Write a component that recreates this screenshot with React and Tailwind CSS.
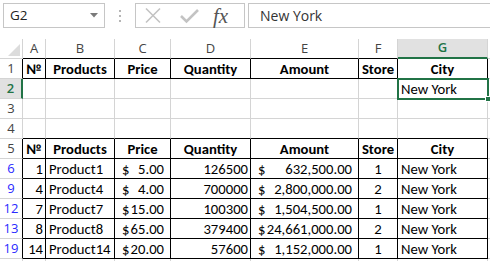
import React from "react";

const gridTpl = "grid grid-cols-[23px_23px_69px_56px_80px_108px_39px_90px_1fr]";

const cellFont = { fontFamily: "Carlito, Lato, 'Liberation Sans', sans-serif" };

function HeaderCell({ children, selected }) {
  return (
    <div
      className={
        "h-[20px] flex items-center justify-center text-[13px] border-r border-b " +
        (selected
          ? "bg-[#e1e1e1] text-[#217346] font-semibold border-r-[#d4d4d4] border-b-2 border-b-[#217346]"
          : "bg-white text-[#444] border-r-[#d4d4d4] border-b-black")
      }
      style={{ fontFamily: "'Open Sans', 'Noto Sans', sans-serif" }}
    >
      {children}
    </div>
  );
}

function RowHead({ n, kind }) {
  let cls = "h-[20px] flex items-center justify-center text-[13px] border-b border-b-[#d4d4d4] ";
  if (kind === "sel") cls += "bg-[#e1e1e1] text-[#217346] font-semibold border-r-2 border-r-[#217346]";
  else if (kind === "blue") cls += "bg-white text-[#2a2aff] border-r border-r-black";
  else if (kind === "table") cls += "bg-white text-[#444] border-r border-r-black";
  else cls += "bg-white text-[#444] border-r border-r-[#d4d4d4]";
  return (
    <div className={cls} style={{ fontFamily: "'Open Sans', 'Noto Sans', sans-serif" }}>
      {n}
    </div>
  );
}

function Cell({ children, black, bottomBlack, align = "left", className = "" }) {
  let cls = "h-[20px] flex items-center text-[14.67px] text-black whitespace-nowrap overflow-hidden border-r border-b ";
  cls += black ? "border-r-black " : "border-r-[#d4d4d4] ";
  cls += black || bottomBlack ? "border-b-black " : "border-b-[#d4d4d4] ";
  if (align === "center") cls += "justify-center ";
  if (align === "right") cls += "justify-end pr-[2px] ";
  if (align === "left") cls += "pl-[3px] ";
  return (
    <div className={cls + className} style={cellFont}>
      {children}
    </div>
  );
}

function Acct({ value, black }) {
  return (
    <Cell black={black} align="none" className="justify-between pl-[7px] pr-[6px]">
      <span>$</span>
      <span>{value}</span>
    </Cell>
  );
}

const data = [
  ["6", "1", "Product1", "5.00", "126500", "632,500.00", "1"],
  ["9", "4", "Product4", "4.00", "700000", "2,800,000.00", "2"],
  ["12", "7", "Product7", "15.00", "100300", "1,504,500.00", "1"],
  ["13", "8", "Product8", "65.00", "379400", "24,661,000.00", "2"],
  ["19", "14", "Product14", "20.00", "57600", "1,152,000.00", "1"],
];

function HeaderRow({ n, kind }) {
  const labels = ["№", "Products", "Price", "Quantity", "Amount", "Store", "City"];
  return (
    <>
      <RowHead n={n} kind={kind} />
      {labels.map((l, i) => (
        <Cell key={i} black align="center" className={"font-bold " + (i === 6 && n === "1" ? "border-b-[#217346]" : "")}>
          {l}
        </Cell>
      ))}
      <Cell />
    </>
  );
}

function EmptyRow({ n, bottomBlack }) {
  return (
    <>
      <RowHead n={n} />
      {[0, 1, 2, 3, 4, 5, 6].map((i) => (
        <Cell key={i} bottomBlack={bottomBlack} />
      ))}
      <Cell />
    </>
  );
}

export default function App() {
  return (
    <div className="w-[490px] h-[261px] overflow-hidden bg-white relative">
      {/* formula bar */}
      <div className="h-[39px] flex items-start pt-[3px] pl-[3px] bg-white">
        <div className="w-[102px] h-[25px] border border-[#c6c6c6] flex items-center justify-between pl-[6px] pr-[6px]">
          <span className="text-[13.5px] text-[#222]" style={{ fontFamily: "'Open Sans', 'Noto Sans', sans-serif" }}>
            G2
          </span>
          <svg width="8" height="5" viewBox="0 0 8 5">
            <path d="M0 0 L8 0 L4 4.5 Z" fill="#7a7a7a" />
          </svg>
        </div>
        <div className="w-[30px] h-[25px] flex flex-col items-center justify-center gap-[3px]">
          <div className="w-[2px] h-[2px] bg-[#b5b5b5]" />
          <div className="w-[2px] h-[2px] bg-[#b5b5b5]" />
          <div className="w-[2px] h-[2px] bg-[#b5b5b5]" />
        </div>
        <div className="w-[110px] h-[25px] border border-[#c6c6c6] flex items-center relative">
          <svg width="108" height="23" viewBox="0 0 108 23" className="shrink-0">
            <path d="M10 4.5 L24 18.5 M24 4.5 L10 18.5" stroke="#c3c3c3" strokeWidth="1.6" />
            <path d="M45 12 L50.5 17.5 L62 6" stroke="#c3c3c3" strokeWidth="2.6" fill="none" />
          </svg>
          <span
            className="absolute left-[77px] top-[-3px] text-[21px] italic text-[#555]"
            style={{ fontFamily: "'Liberation Serif', 'DejaVu Serif', serif" }}
          >
            fx
          </span>
        </div>
        <div className="ml-[3px] flex-1 h-[25px] border border-[#c6c6c6] border-r-0 flex items-center pl-[11px]">
          <span className="text-[14px] text-[#333]" style={{ fontFamily: "'Open Sans', 'Noto Sans', sans-serif" }}>
            New York
          </span>
        </div>
      </div>

      {/* grid */}
      <div className={gridTpl + " relative"}>
        <div className="h-[20px] bg-white border-r border-b border-[#d4d4d4] relative overflow-hidden">
          <svg className="absolute right-[2px] bottom-[2px]" width="12" height="12" viewBox="0 0 12 12">
            <path d="M12 0 L12 12 L0 12 Z" fill="#dcdcdc" />
          </svg>
        </div>
        <HeaderCell>A</HeaderCell>
        <HeaderCell>B</HeaderCell>
        <HeaderCell>C</HeaderCell>
        <HeaderCell>D</HeaderCell>
        <HeaderCell>E</HeaderCell>
        <HeaderCell>F</HeaderCell>
        <HeaderCell selected>G</HeaderCell>
        <div className="h-[20px] bg-white border-b border-[#d4d4d4]" />

        <HeaderRow n="1" kind="table" />

        <RowHead n="2" kind="sel" />
        {[0, 1, 2, 3, 4, 5].map((i) => (
          <Cell key={i} />
        ))}
        <Cell>New York</Cell>
        <Cell />

        <EmptyRow n="3" />
        <EmptyRow n="4" bottomBlack />

        <HeaderRow n="5" kind="table" />

        {data.map((r) => (
          <React.Fragment key={r[0]}>
            <RowHead n={r[0]} kind="blue" />
            <Cell black align="right">{r[1]}</Cell>
            <Cell black>{r[2]}</Cell>
            <Acct value={r[3]} black />
            <Cell black align="right">{r[4]}</Cell>
            <Acct value={r[5]} black />
            <Cell black align="center">{r[6]}</Cell>
            <Cell black>New York</Cell>
            <Cell />
          </React.Fragment>
        ))}

        <EmptyRow n="" />

        {/* selection overlay for G2 */}
        <div className="absolute left-[397px] top-[39px] w-[92px] h-[22px] border-2 border-[#217346] pointer-events-none">
          <div className="absolute right-[-4px] bottom-[-4px] w-[6px] h-[6px] bg-[#217346] border border-white" />
        </div>
      </div>
    </div>
  );
}
